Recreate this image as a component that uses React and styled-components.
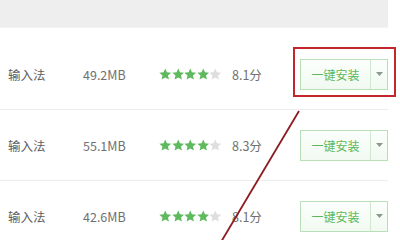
import React from "react";
import styled, { createGlobalStyle } from "styled-components";

const Global = createGlobalStyle`
  html, body { margin: 0; padding: 0; background: #fff; }
  body { width: 400px; height: 240px; overflow: hidden; font-family: "Noto Sans CJK SC", "Noto Sans", sans-serif; }
`;

const Page = styled.div`
  position: relative;
  width: 400px;
  height: 240px;
  overflow: hidden;
`;

const TopPanel = styled.div`
  width: 388px;
  height: 27px;
  background: #eeeeee;
  border-bottom: 1px solid #f3f3f3;
`;

const List = styled.div`
  width: 388px;
  margin-top: 11px;
`;

const Row = styled.div`
  display: flex;
  align-items: center;
  height: 71px;
  border-bottom: 1px solid #ececec;
  box-sizing: border-box;
  padding-left: 8px;
`;

const Cell = styled.div`
  width: ${(p) => p.$w}px;
  font-size: 12.5px;
  color: ${(p) => p.$color || "#606060"};
  white-space: nowrap;
`;

const Stars = styled.div`
  display: flex;
  width: 73px;
`;

const ScoreCell = styled(Cell)`
  width: 68px;
  color: #707070;
`;

const Button = styled.div`
  display: flex;
  width: 88px;
  height: 31px;
  box-sizing: border-box;
  border: 1px solid #b9dfb9;
  background: linear-gradient(#fcfffc, #f1f9f1);
`;

const Main = styled.div`
  flex: 1;
  display: flex;
  align-items: center;
  justify-content: center;
  font-size: 12px;
  color: #5cb85c;
  border-right: 1px solid #cfe8cf;
`;

const Arrow = styled.div`
  width: 16px;
  display: flex;
  align-items: center;
  justify-content: center;
`;

const Highlight = styled.div`
  position: absolute;
  left: 293px;
  top: 47px;
  width: 103px;
  height: 50px;
  box-sizing: border-box;
  border: 2px solid #c4262e;
`;

const Overlay = styled.svg`
  position: absolute;
  left: 0;
  top: 0;
`;

const Star = ({ on }) => (
  <svg width="12.5" height="12.5" viewBox="0.6 0.8 22.8 22.8">
    <polygon
      points="12,1.5 15.1,8.6 22.8,9.3 17,14.4 18.7,22 12,18 5.3,22 7,14.4 1.2,9.3 8.9,8.6"
      fill={on ? "#5fba5f" : "#dedede"}
    />
  </svg>
);

const rows = [
  { size: "49.2MB", score: "8.1分" },
  { size: "55.1MB", score: "8.3分" },
  { size: "42.6MB", score: "8.1分" },
];

export default function App() {
  return (
    <Page>
      <Global />
      <TopPanel />
      <List>
        {rows.map((r, i) => (
          <Row key={i}>
            <Cell $w={75}>输入法</Cell>
            <Cell $w={76} $color="#707070">{r.size}</Cell>
            <Stars>
              {[0, 1, 2, 3, 4].map((k) => (
                <Star key={k} on={k < 4} />
              ))}
            </Stars>
            <ScoreCell>{r.score}</ScoreCell>
            <Button>
              <Main>一键安装</Main>
              <Arrow>
                <svg width="7" height="4" viewBox="0 0 7 4">
                  <polygon points="0,0 7,0 3.5,4" fill="#8a9a8a" />
                </svg>
              </Arrow>
            </Button>
          </Row>
        ))}
      </List>
      <Highlight />
      <Overlay width="400" height="240">
        <line x1="299" y1="111" x2="221" y2="242" stroke="#8a1c22" strokeWidth="1.8" />
      </Overlay>
    </Page>
  );
}
